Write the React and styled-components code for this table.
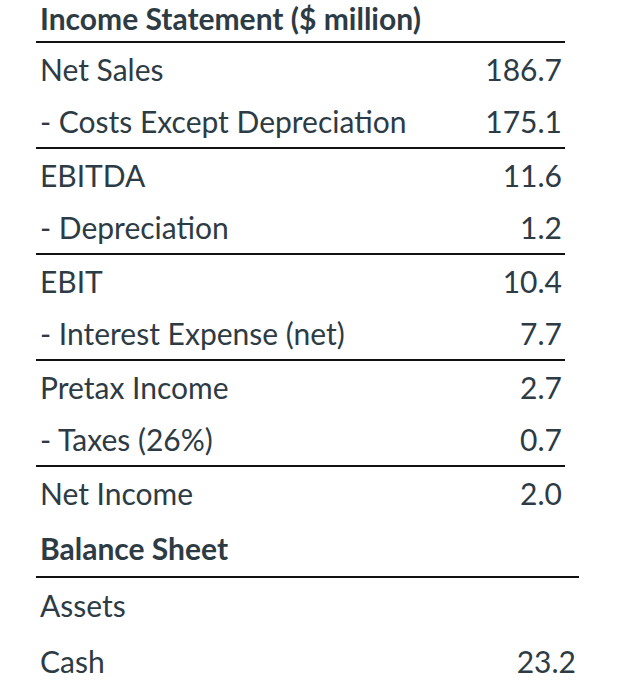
import React from 'react';
import styled, { createGlobalStyle } from 'styled-components';

const GlobalStyle = createGlobalStyle`
  body {
    margin: 0;
    background: #fff;
    font-family: Lato, "Open Sans", sans-serif;
    color: #2d3b45;
  }
`;

const Page = styled.div`
  padding-left: 36px;
`;

const Table = styled.div`
  width: ${props => props.width}px;
  display: flex;
  flex-direction: column;
`;

const Row = styled.div`
  display: flex;
  justify-content: space-between;
  align-items: center;
  height: ${props => props.h || 52}px;
  padding: 0 3px ${props => props.pb || 0}px 4px;
  font-size: 30px;
  line-height: 1.2;
  font-weight: ${props => (props.bold ? 700 : 400)};
  border-top: ${props => (props.line ? '2px solid #111' : 'none')};
  box-sizing: content-box;
`;

const Label = styled.span``;
const Value = styled.span``;

const income = [
  ['Net Sales', '186.7', true],
  ['- Costs Except Depreciation', '175.1', false],
  ['EBITDA', '11.6', true],
  ['- Depreciation', '1.2', false],
  ['EBIT', '10.4', true],
  ['- Interest Expense (net)', '7.7', false],
  ['Pretax Income', '2.7', true],
  ['- Taxes (26%)', '0.7', false],
  ['Net Income', '2.0', true],
];

export default function App() {
  return (
    <>
      <GlobalStyle />
      <Page>
        <Table width={529}>
          <Row bold h={35} pb={6}>
            <Label>Income Statement ($ million)</Label>
          </Row>
          {income.map(([l, v, line]) => (
            <Row key={l} line={line}>
              <Label>{l}</Label>
              <Value>{v}</Value>
            </Row>
          ))}
        </Table>
        <Table width={543}>
          <Row bold h={57}>
            <Label>Balance Sheet</Label>
          </Row>
          <Row line h={54}>
            <Label>Assets</Label>
          </Row>
          <Row h={58}>
            <Label>Cash</Label>
            <Value>23.2</Value>
          </Row>
        </Table>
      </Page>
    </>
  );
}
